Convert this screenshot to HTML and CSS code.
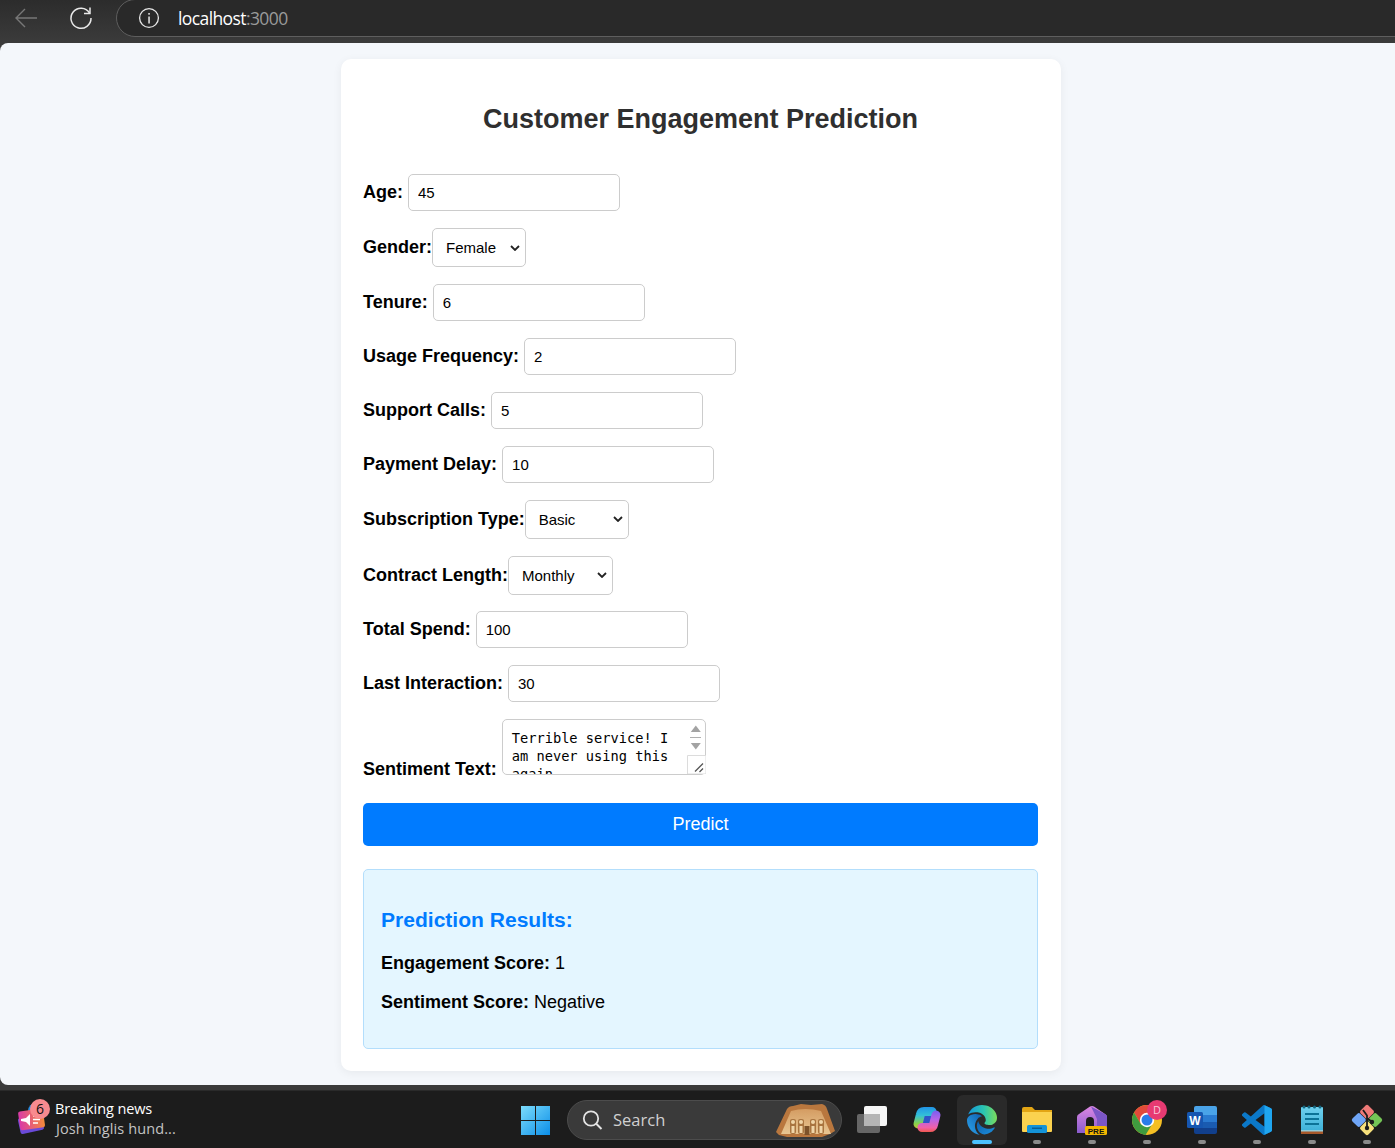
FILE: index.html
```html
<!DOCTYPE html>
<html lang="en">
<head>
<meta charset="utf-8">
<title>Customer Engagement Prediction</title>
<link rel="stylesheet" href="styles.css">
</head>
<body>
<div class="screen">
  <header class="browser-bar">
    <svg class="tb-icon back" width="26" height="26" viewBox="0 0 26 26"><path d="M24 13H3M12 4l-9 9 9 9" fill="none" stroke="#777" stroke-width="1.4"/></svg>
    <svg class="tb-icon reload" width="26" height="26" viewBox="0 0 26 26"><path d="M21.5 8A10 10 0 1 0 23 13" fill="none" stroke="#e8e8e8" stroke-width="1.5"/><path d="M22 2.5V8.5H16" fill="none" stroke="#e8e8e8" stroke-width="1.5"/></svg>
    <div class="address">
      <svg class="info" width="22" height="22" viewBox="0 0 22 22"><circle cx="11" cy="11" r="9.4" fill="none" stroke="#e8e8e8" stroke-width="1.3"/><rect x="10.3" y="9.5" width="1.5" height="7" fill="#e8e8e8"/><rect x="10.3" y="6" width="1.5" height="1.7" fill="#e8e8e8"/></svg>
      <span class="host">localhost<span class="port">:3000</span></span>
    </div>
  </header>
  <main class="viewport">
    <section class="card">
      <h1 class="title">Customer Engagement Prediction</h1>
      <form class="form">
        <div class="row gap"><label class="label">Age:</label><input class="field" type="text" value="45"></div>
        <div class="row pick"><label class="label">Gender:</label><select class="choice w94"><option>Female</option></select></div>
        <div class="row gap"><label class="label">Tenure:</label><input class="field" type="text" value="6"></div>
        <div class="row gap"><label class="label">Usage Frequency:</label><input class="field" type="text" value="2"></div>
        <div class="row gap"><label class="label">Support Calls:</label><input class="field" type="text" value="5"></div>
        <div class="row gap"><label class="label">Payment Delay:</label><input class="field" type="text" value="10"></div>
        <div class="row pick"><label class="label">Subscription Type:</label><select class="choice w104"><option>Basic</option></select></div>
        <div class="row pick"><label class="label">Contract Length:</label><select class="choice w105"><option>Monthly</option></select></div>
        <div class="row gap"><label class="label">Total Spend:</label><input class="field" type="text" value="100"></div>
        <div class="row gap"><label class="label">Last Interaction:</label><input class="field" type="text" value="30"></div>
        <div class="row gap last"><label class="label">Sentiment Text:</label>
          <div class="area-wrap">
            <textarea class="area" rows="3">Terrible service! I am never using this again.</textarea>
            <svg class="fake-scroll" width="19" height="54" viewBox="0 0 19 54"><path d="M8.8 5.5l5 6.5h-10z" fill="#a3a3a3"/><path d="M3 17.5h11" stroke="#b0b0b0"/><path d="M3.8 23h10l-5 6.5z" fill="#a3a3a3"/><path d="M.5 54V35.5H19V54z" fill="#fff" stroke="#dcdcdc"/><path d="M8 51.5l8-8M12.5 52l3.5-3.5" stroke="#555" stroke-width="1.3"/></svg>
          </div>
        </div>
        <button class="predict" type="button">Predict</button>
      </form>
      <div class="results">
        <h3 class="results-title">Prediction Results:</h3>
        <p class="result"><strong>Engagement Score:</strong> 1</p>
        <p class="result"><strong>Sentiment Score:</strong> Negative</p>
      </div>
    </section>
  </main>
  <footer class="taskbar">
    <div class="news">
      <div class="news-icon">
        <svg width="32" height="36" viewBox="0 0 32 36"><defs><linearGradient id="ng" x1="0" x2="1"><stop offset="0" stop-color="#d93aa8"/><stop offset="1" stop-color="#f58a3a"/></linearGradient></defs><rect x="3" y="17" width="24" height="16" rx="2" fill="#6a4ad8" transform="rotate(-12 15 25)"/><circle cx="20" cy="12" r="8" fill="#2a8be0"/><rect x="3" y="11" width="25" height="19" rx="2" fill="url(#ng)" transform="rotate(-8 15 20)"/><path d="M5 20l5-1 4-4v12l-4-4-5-1z" fill="#fff"/><path d="M17 17h7M17 20.5h7M17 24h5" stroke="#fff" stroke-width="1.4"/></svg>
        <span class="news-badge">6</span>
      </div>
      <div class="news-text"><div class="news-head">Breaking news</div><div class="news-sub">Josh Inglis hund...</div></div>
    </div>
    <div class="tray">
      <svg class="win" width="30" height="30" viewBox="0 0 30 30"><defs><linearGradient id="wg" x1="0" y1="0" x2="1" y2="1"><stop offset="0" stop-color="#7cdcfb"/><stop offset="1" stop-color="#0b8ee8"/></linearGradient></defs><path d="M0 1h14v14H0zM15 1h14v14H15zM0 16h14v14H0zM15 16h14v14H15z" fill="url(#wg)"/></svg>
      <div class="search">
        <svg width="22" height="22" viewBox="0 0 22 22"><circle cx="10" cy="9.5" r="7.2" fill="none" stroke="#e4e4e4" stroke-width="1.8"/><path d="M15 14.5l5.5 5.5" stroke="#e4e4e4" stroke-width="2"/></svg>
        <span class="search-text">Search</span>
        <svg class="temple" width="62" height="36" viewBox="0 0 62 36"><defs><linearGradient id="tg" x1="0" y1="0" x2="0" y2="1"><stop offset="0" stop-color="#d49c62"/><stop offset="1" stop-color="#e8c692"/></linearGradient></defs><path d="M1 30L12 7q2-3 6-3l8-2 10 1 11-1q4 1 5 5l8 22-5 3-8 3H12l-8-2z" fill="#b9773e"/><path d="M6 32l10-23q14-4 30 0l10 23z" fill="url(#tg)"/><g fill="#a9743f"><rect x="15" y="17" width="6" height="15" rx="2"/><rect x="23" y="17" width="6" height="15" rx="2"/><rect x="35" y="17" width="6" height="15" rx="2"/><rect x="43" y="17" width="6" height="15" rx="2"/><rect x="29.5" y="24" width="5" height="9" fill="#7d5229"/></g><g fill="#f0d5a8"><circle cx="18" cy="20" r="2"/><circle cx="26" cy="20" r="2"/><circle cx="38" cy="20" r="2"/><circle cx="46" cy="20" r="2"/><rect x="16.5" y="24" width="3" height="7"/><rect x="24.5" y="24" width="3" height="7"/><rect x="36.5" y="24" width="3" height="7"/><rect x="44.5" y="24" width="3" height="7"/></g></svg>
      </div>
      <div class="apps">
        <div class="app">
          <svg width="31" height="28" viewBox="0 0 31 28"><rect x="7" y="0" width="23" height="20" rx="2" fill="#f6f6f6"/><rect x="0" y="8" width="23" height="19" rx="2" fill="#6f6f6f" fill-opacity=".9"/><rect x="7" y="8" width="16" height="12" fill="#b5b5b5"/></svg>
        </div>
        <div class="app">
          <svg width="30" height="27" viewBox="0 0 30 27"><defs><linearGradient id="c1" x1="0" y1="0" x2="0" y2="27" gradientUnits="userSpaceOnUse"><stop offset="0" stop-color="#1f8fe8"/><stop offset=".35" stop-color="#33c0d8"/><stop offset=".65" stop-color="#8ad04a"/><stop offset="1" stop-color="#f6b52c"/></linearGradient><linearGradient id="c2" x1="0" y1="0" x2="0" y2="27" gradientUnits="userSpaceOnUse"><stop offset="0" stop-color="#5a5cf0"/><stop offset=".5" stop-color="#b664e8"/><stop offset=".8" stop-color="#f060a8"/><stop offset="1" stop-color="#f0583a"/></linearGradient></defs><path d="M12 5H21L18 22H8z" fill="#2f54c8"/><path d="M20 5.5H12Q9 5.5 8.3 9L6 18" fill="none" stroke="url(#c1)" stroke-width="9" stroke-linecap="round"/><path d="M10 21.5h8Q21 21.500 21.700 18L24 9" fill="none" stroke="url(#c2)" stroke-width="9" stroke-linecap="round"/></svg>
        </div>
        <div class="app current">
          <svg width="30" height="30" viewBox="0 0 24 24"><defs><linearGradient id="e1" x1="0" y1="0" x2="1" y2="1"><stop offset="0" stop-color="#0f5da8"/><stop offset="1" stop-color="#1b8fdc"/></linearGradient><linearGradient id="e2" x1="1" y1="0" x2="0" y2="1"><stop offset="0" stop-color="#0e5fae"/><stop offset="1" stop-color="#2ea6ee"/></linearGradient><linearGradient id="e3" x1="0" y1="0" x2="1" y2="0"><stop offset="0" stop-color="#1597dc"/><stop offset=".55" stop-color="#2bc5b0"/><stop offset="1" stop-color="#7cdb5a"/></linearGradient></defs><path d="M21.86 17.86q.14 0 .25.12.1.13.1.25t-.11.33l-.32.46-.43.53-.44.5q-.21.25-.38.42l-.22.23q-.58.53-1.34 1.04-.76.51-1.6.91-.86.4-1.74.64t-1.67.24q-.9 0-1.69-.28-.8-.28-1.48-.78-.68-.5-1.22-1.17-.53-.66-.92-1.44-.38-.77-.58-1.6-.2-.83-.2-1.67 0-1 .32-1.96.33-.97.87-1.8.14.95.55 1.77.41.82 1.02 1.5.6.68 1.38 1.21.78.54 1.64.9.86.36 1.77.56.92.2 1.8.2 1.12 0 2.18-.24 1.06-.23 2.06-.72l.2-.1.2-.05z" fill="url(#e1)"/><path d="M6.36 16.59q0 1.1.27 2.15.27 1.06.78 2.03.51.96 1.24 1.77.74.82 1.66 1.4-1.47-.2-2.8-.74-1.33-.55-2.48-1.37-1.15-.83-2.08-1.9-.92-1.07-1.58-2.33T.36 14.94Q0 13.54 0 12.06q0-.81.32-1.49.31-.68.83-1.23.53-.55 1.2-.96.66-.4 1.35-.66.74-.27 1.5-.39.78-.12 1.55-.12.7 0 1.42.1.72.12 1.4.35.68.23 1.32.57.63.35 1.16.83-.35 0-.7.07-.33.07-.65.23v-.02q-.63.28-1.2.74-.57.46-1.05 1.04-.48.58-.87 1.26-.38.67-.65 1.39-.27.71-.42 1.44-.15.72-.15 1.38z" fill="url(#e2)"/><path d="M11.96.06q1.7 0 3.33.39 1.63.38 3.07 1.15 1.43.77 2.62 1.93 1.18 1.16 1.98 2.7.49.94.76 1.96.28 1 .28 2.08 0 .89-.23 1.7-.24.8-.69 1.48-.45.68-1.1 1.22-.64.53-1.45.88-.54.24-1.11.36-.58.13-1.16.13-.42 0-.97-.03-.54-.03-1.1-.12-.55-.09-1.05-.28-.5-.19-.84-.5-.12-.09-.23-.24-.1-.16-.1-.33 0-.15.16-.35.16-.2.35-.5.2-.28.36-.68.16-.4.16-.95 0-1.06-.4-1.96-.4-.91-1.06-1.64-.66-.74-1.52-1.28-.86-.55-1.79-.89-.84-.3-1.72-.44-.87-.14-1.76-.14-1.55 0-3.06.45T.94 7.55q.71-1.74 1.81-3.13Q3.86 3.03 5.27 2.08 6.68 1.13 8.3.6 9.94.06 11.96.06z" fill="url(#e3)"/></svg>
          <i class="pip active"></i>
        </div>
        <div class="app">
          <svg width="30" height="27" viewBox="0 0 30 27"><path d="M0 3q0-2 2-2h8l3 3h17v8H0z" fill="#e3a514"/><path d="M0 6h30v19q0 1-1 1H1q-1 0-1-1z" fill="#fbd24f"/><rect x="5" y="19" width="20" height="8" rx="1.5" fill="#1493d8"/><rect x="10" y="21.5" width="10" height="1.5" fill="#0a5e94"/></svg>
          <i class="pip"></i>
        </div>
        <div class="app">
          <svg width="30" height="30" viewBox="0 0 30 30"><defs><linearGradient id="h1" x1="0" y1="0" x2="0" y2="1"><stop offset="0" stop-color="#dd88e2"/><stop offset="1" stop-color="#8a5ccf"/></linearGradient></defs><path d="M0 12Q0 10 2 9L13 1.5Q15 .5 17 1.5L28 9Q30 10 30 12V28H0z" fill="url(#h1)"/><path d="M14 1.5L28 9Q30 10 30 12V28H20V14z" fill="#7b56c6"/><path d="M9 28V16Q9 12 13 12T17 16V28z" fill="#1c1c1c"/><rect x="8" y="21" width="22" height="9" rx="1.5" fill="#f2b600"/><text class="pre" x="19" y="28.5" text-anchor="middle">PRE</text></svg>
          <i class="pip"></i>
        </div>
        <div class="app">
          <svg class="chrome" width="30" height="30" viewBox="0 0 30 30"><circle cx="15" cy="15" r="15" fill="#f5bf24"/><path d="M15 0A15 15 0 0 0 2 7.5L9 19.5 15 9H28A15 15 0 0 0 15 0z" fill="#e14a3a"/><path d="M2 7.5A15 15 0 0 0 13.5 29.900L20 19.5H9z" fill="#3f9b3f"/><circle cx="15" cy="15" r="7.2" fill="#fff"/><circle cx="15" cy="15" r="5.5" fill="#2a7ce8"/></svg>
          <span class="profile-badge">D</span>
          <i class="pip"></i>
        </div>
        <div class="app">
          <svg width="30" height="28" viewBox="0 0 30 28"><path d="M7 2q0-2 2-2h19q2 0 2 2v7H7z" fill="#4aa3e8"/><path d="M7 9h23v7H7z" fill="#2a7ad0"/><path d="M7 16h23v6H7z" fill="#1a5bb0"/><path d="M7 22h23v4q0 2-2 2H9q-2 0-2-2z" fill="#113f8c"/><rect x="0" y="6" width="16" height="16" rx="1.5" fill="#1656b0"/><text class="word" x="8" y="18.5" text-anchor="middle">W</text></svg>
          <i class="pip"></i>
        </div>
        <div class="app">
          <svg width="30" height="30" viewBox="0 0 24 24"><path d="M23.15 2.587L18.21.21a1.494 1.494 0 0 0-1.705.29l-9.46 8.63-4.12-3.128a.999.999 0 0 0-1.276.057L.327 7.261A1 1 0 0 0 .326 8.74L3.899 12 .326 15.26a1 1 0 0 0 .001 1.479L1.65 17.94a.999.999 0 0 0 1.276.057l4.12-3.128 9.46 8.63a1.492 1.492 0 0 0 1.704.29l4.942-2.377A1.5 1.5 0 0 0 24 20.06V3.939a1.5 1.5 0 0 0-.85-1.352zm-5.146 14.861L10.826 12l7.178-5.448v10.896z" fill="#0b78c8"/><path d="M18 .13l5.15 2.457A1.5 1.5 0 0 1 24 3.94V20.06a1.5 1.5 0 0 1-.85 1.35L18 23.87z" fill="#1fa6f0"/></svg>
          <i class="pip"></i>
        </div>
        <div class="app">
          <svg width="24" height="30" viewBox="0 0 24 30"><defs><linearGradient id="n1" x1="0" y1="0" x2="0" y2="1"><stop offset="0" stop-color="#6fd0ee"/><stop offset="1" stop-color="#38aed6"/></linearGradient></defs><rect x="1" y="2" width="22" height="27" rx="1" fill="url(#n1)"/><rect x="1" y="25.5" width="22" height="1" fill="#e8e4d8"/><rect x="1" y="26.5" width="22" height="2.5" fill="#a8582a"/><g fill="#0c7397"><rect x="5" y="8" width="14" height="2"/><rect x="5" y="13" width="14" height="2"/><rect x="5" y="18" width="14" height="2"/></g><g fill="#13667f"><circle cx="4" cy="2" r="1.5"/><circle cx="9" cy="2" r="1.5"/><circle cx="14.5" cy="2" r="1.5"/><circle cx="20" cy="2" r="1.5"/></g></svg>
          <i class="pip"></i>
        </div>
        <div class="app">
          <svg width="32" height="32" viewBox="0 0 32 32"><g transform="rotate(45 16 16)"><rect x="4.7" y="4.7" width="11" height="11" rx="2" fill="#ef7a78"/><rect x="16.3" y="4.7" width="11" height="11" rx="2" fill="#74c556"/><rect x="16.3" y="16.3" width="11" height="11" rx="2" fill="#f6e07c"/><rect x="4.7" y="16.3" width="11" height="11" rx="2" fill="#6fa5f6"/></g><path d="M12 6l4 5.5V24M16 14l5 4" stroke="#1c1c1c" stroke-width="1.8" fill="none"/><circle cx="16" cy="24" r="2.2" fill="#1c1c1c"/><circle cx="21" cy="18" r="2.2" fill="#1c1c1c"/></svg>
          <i class="pip"></i>
        </div>
      </div>
    </div>
  </footer>
</div>
</body>
</html>
```
FILE: styles.css
```css
* { box-sizing: border-box; }
html, body { margin: 0; padding: 0; }
body { width: 1395px; height: 1148px; overflow: hidden; font-family: "Liberation Sans", Arial, sans-serif; background: #3a3a3a; }
.screen { display: flex; flex-direction: column; height: 1148px; }

.browser-bar { height: 43px; flex: none; display: flex; align-items: flex-start; background: linear-gradient(#2c2c2c, #3b3b3b); color: #fff; padding-left: 13px; overflow: hidden; }
.tb-icon { flex: none; margin-top: 5px; }
.reload { margin-left: 29px; }
.address { margin-left: 22px; flex: 1; height: 38px; margin-right: -40px; border: 1px solid #5e5e5e; border-radius: 24px; background: #292929; margin-top: -1px; display: flex; align-items: center; padding-left: 21px; }
.info { flex: none; }
.host { margin-left: 18px; font: 17.5px "Open Sans", "Noto Sans", sans-serif; letter-spacing: -.6px; color: #fff; }
.port { color: #9a9a9a; }

.viewport { flex: none; height: 1042px; background: #f4f7fb; border-radius: 8px 0 0 8px; padding-top: 16px; }
.card { width: 720px; height: 1012px; margin: 0 0 0 341px; background: #fff; border-radius: 10px; padding: 24px 23px 22px 22px; box-shadow: 0 2px 10px rgba(0, 0, 0, .06); }
.title { margin: 22px 0 40px; height: 29px; font-size: 27px; line-height: 29px; font-weight: 700; color: #2f2f2f; text-align: center; }

.form { display: flex; flex-direction: column; }
.row { display: flex; align-items: baseline; margin-bottom: 17px; }
.row.pick { margin-bottom: 16.8px; }
.row.gap { column-gap: 5px; }
.row.last { margin-bottom: 28px; align-items: flex-end; }
.row.last .label { margin-bottom: -5px; }
.label { font-size: 18px; font-weight: 700; color: #000; white-space: nowrap; }
.field { width: 212px; height: 37px; padding: 0 9px; border: 1px solid #ccc; border-radius: 5px; font: 15px "Liberation Sans", Arial, sans-serif; color: #000; background: #fff; }
.choice { appearance: none; height: 39px; padding: 0 9px 0 13px; border: 1px solid #ccc; border-radius: 5px; font: 15px "Liberation Sans", Arial, sans-serif; color: #000; background: #fff url("data:image/svg+xml,%3Csvg xmlns='http://www.w3.org/2000/svg' width='10' height='6' viewBox='0 0 10 6'%3E%3Cpath d='M1 1l4 4 4-4' fill='none' stroke='%23222' stroke-width='1.8'/%3E%3C/svg%3E") no-repeat right 5px center; }
.w94 { width: 94px; }
.w104 { width: 104px; }
.w105 { width: 105px; }
.area-wrap { position: relative; width: 204px; height: 56px; }
.area { display: block; width: 204px; height: 56px; padding: 9px 28px 0 9px; border: 1px solid #ccc; border-radius: 5px; font: 13.7px/18px "DejaVu Sans Mono", "Liberation Mono", monospace; color: #000; background: #fff; overflow: hidden; resize: none; }
.fake-scroll { position: absolute; right: 0; top: 1px; }
.predict { display: block; width: 675px; height: 43px; border: 0; border-radius: 5px; background: #007bff; color: #fff; font: 18px "Liberation Sans", Arial, sans-serif; }

.results { margin-top: 23px; width: 675px; height: 180px; padding: 38px 17px 0; border: 1px solid #b3defc; border-radius: 5px; background: #e4f6ff; }
.results-title { margin: 0 0 21px; font-size: 21.06px; line-height: 24px; font-weight: 700; color: #007bff; }
.result { margin: 0 0 18px; font-size: 18px; line-height: 21px; color: #000; }

.taskbar { margin-top: 5px; flex: 1; background: #1c1c1c; display: flex; position: relative; border-top: 1px solid #2a2a2a; }
.news { display: flex; width: 511px; padding: 8px 0 0 16px; }
.news-icon { position: relative; width: 32px; height: 36px; }
.news-badge { position: absolute; left: 14px; top: 0; width: 20px; height: 20px; border-radius: 50%; background: #f88a8f; color: #111; font: 14px/20px "Open Sans", sans-serif; text-align: center; }
.news-text { margin-left: 7px; font: 14.5px/20px "Open Sans", "Noto Sans", sans-serif; letter-spacing: -.1px; }
.news-head { color: #fff; }
.news-sub { color: #c4c4c4; letter-spacing: .1px; margin-left: 1px; }
.tray { display: flex; align-items: center; flex: 1; height: 57px; }
.win { flex: none; margin: 0 16px 0 10px; }
.search { flex: none; width: 275px; height: 40px; border-radius: 20px; background: #3a3a3a; border: 1px solid #4c4c4c; display: flex; align-items: center; padding-left: 13px; position: relative; overflow: hidden; }
.search-text { margin-left: 10px; font: 16.5px "Open Sans", "Noto Sans", sans-serif; color: #d0d0d0; }
.temple { position: absolute; right: 4px; top: 1px; }
.apps { display: flex; gap: 5px; margin-left: 5px; }
.app { width: 50px; height: 50px; display: flex; align-items: center; justify-content: center; position: relative; }
.app.current { background: #2a2a2a; border-radius: 6px; }
.pip { position: absolute; left: 21px; bottom: 1px; width: 8px; height: 4px; border-radius: 2px; background: #8a8a8a; }
.pip.active { left: 15px; width: 20px; background: #4cc2ff; }
.chrome { margin-right: 1px; }
.profile-badge { position: absolute; left: 25px; top: 5px; width: 20px; height: 20px; border-radius: 50%; background: #e73a72; color: #f8c8d8; font: 11px/20px "Open Sans", sans-serif; text-align: center; }
.pre { font: 700 8px "Liberation Sans", sans-serif; fill: #111; }
.word { font: 700 12px "Liberation Sans", sans-serif; fill: #fff; }
```
